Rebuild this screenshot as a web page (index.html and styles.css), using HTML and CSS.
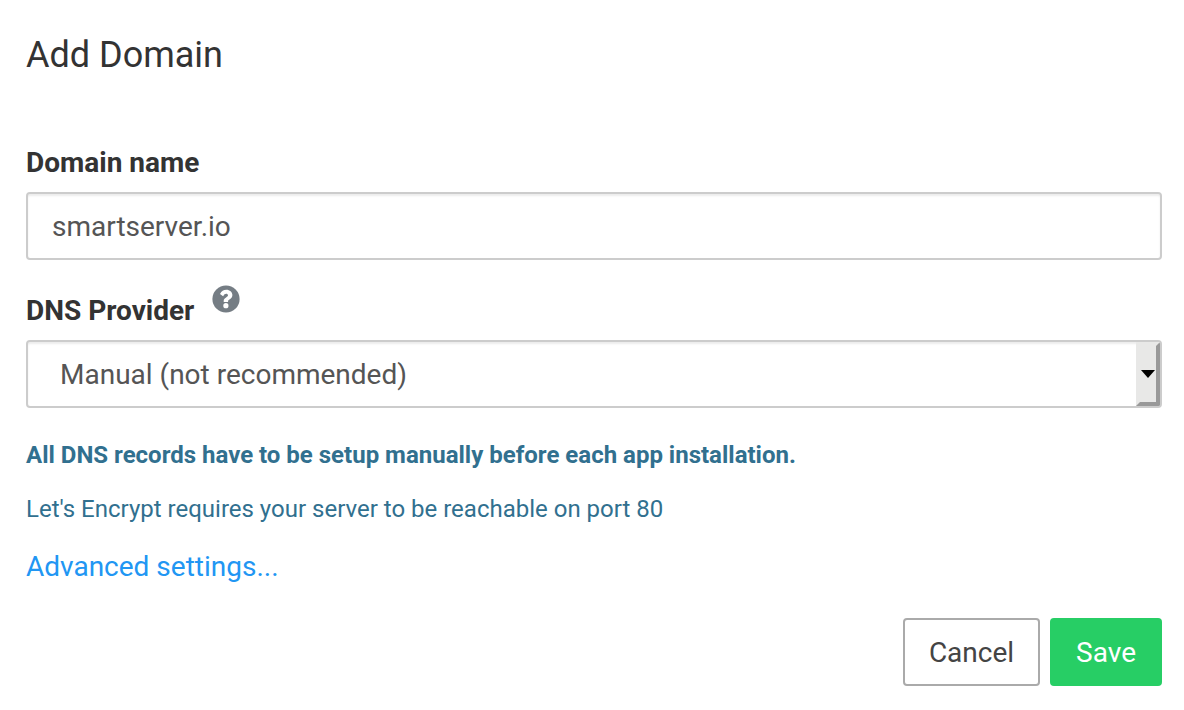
FILE: index.html
```html
<!DOCTYPE html>
<html lang="en">
<head>
<meta charset="utf-8">
<title>Add Domain</title>
<link rel="stylesheet" href="styles.css">
</head>
<body>
<main class="dialog">
  <h1 class="title">Add Domain</h1>
  <form class="form">
    <div class="field">
      <label class="label" for="domain">Domain name</label>
      <input class="control" id="domain" type="text" value="smartserver.io">
    </div>
    <div class="field">
      <div class="label-row">
        <label class="label" for="provider">DNS Provider</label>
        <a class="help" href="#help" aria-label="Help">
          <svg class="help-icon" viewBox="0 0 28 28" aria-hidden="true">
            <circle cx="14" cy="14" r="13.600" fill="#757d84"/>
            <path d="M8 8.900C9.500 6.100 11.500 4.700 14.400 4.700C17.700 4.700 20.400 7 20.400 10.100C20.400 14.200 16.100 14.400 16.100 16.200V17H11.700V15.900C11.700 12.700 16 12.400 16 10.300C16 9.300 15.200 8.700 14.200 8.700C12.900 8.700 12.100 9.500 11.100 11.200Z" fill="#fff"/>
            <circle cx="13.900" cy="20.700" r="2.600" fill="#fff"/>
          </svg>
        </a>
      </div>
      <div class="select">
        <select class="control select-control" id="provider"><option>Manual (not recommended)</option></select>
        <span class="arrow" aria-hidden="true"></span>
      </div>
    </div>
    <p class="note note-strong">All DNS records have to be setup manually before each app installation.</p>
    <p class="note">Let's Encrypt requires your server to be reachable on port 80</p>
    <a class="advanced" href="#advanced">Advanced settings...</a>
    <div class="actions">
      <button class="button" type="button">Cancel</button>
      <button class="button button-save" type="submit">Save</button>
    </div>
  </form>
</main>
</body>
</html>
```
FILE: styles.css
```css
* { box-sizing: border-box; }
body { margin: 0; background: #fff; color: #333; font: 28px/40px Roboto, sans-serif; }
.dialog { padding: 31px 22px 24px 26px; }
.title { margin: 0 0 68px; font-size: 36px; line-height: 48px; font-weight: 400; }
.form { display: flex; flex-direction: column; }
.field { margin-bottom: 25px; }
.label { display: block; font-weight: 700; line-height: 32px; margin-bottom: 13px; }
.label-row { display: flex; align-items: flex-start; gap: 18px; }
.label-row .label { padding-top: 10px; }
.help, .help-icon { display: block; width: 28px; height: 28px; }
.control { display: block; width: 100%; height: 68px; border: 2px solid #ccc; border-radius: 4px; padding: 0 24px; background: #fff; color: #555; font: inherit; box-shadow: inset 0 2px 2px rgba(0,0,0,.075); }
.select { position: relative; }
.select-control { appearance: none; padding: 2px 32px 0; }
.arrow { position: absolute; top: 2px; right: 2px; bottom: 2px; width: 24px; background: #e8e8e7; border: 4px solid; border-color: #e8e8e7 #999 #999 #e8e8e7; border-radius: 0 2px 2px 0; pointer-events: none; }
.arrow::after { content: ""; position: absolute; left: 1px; top: 24px; border: solid transparent; border-width: 8px 7px 0; border-top-color: #000; }
.note { margin: 0 0 22px; font-size: 24px; line-height: 32px; color: #31708f; }
.note-strong { margin-top: 6px; font-weight: 700; }
.advanced { align-self: flex-start; color: #2196f3; text-decoration: none; }
.actions { display: flex; justify-content: flex-end; gap: 10px; margin-top: 31px; }
.button { height: 68px; padding: 2px 24px 0; border: 2px solid #aaa; border-radius: 4px; background: #fff; color: #444; font: inherit; }
.button-save { background: #27ce65; border-color: #27ce65; color: #fff; }
```
